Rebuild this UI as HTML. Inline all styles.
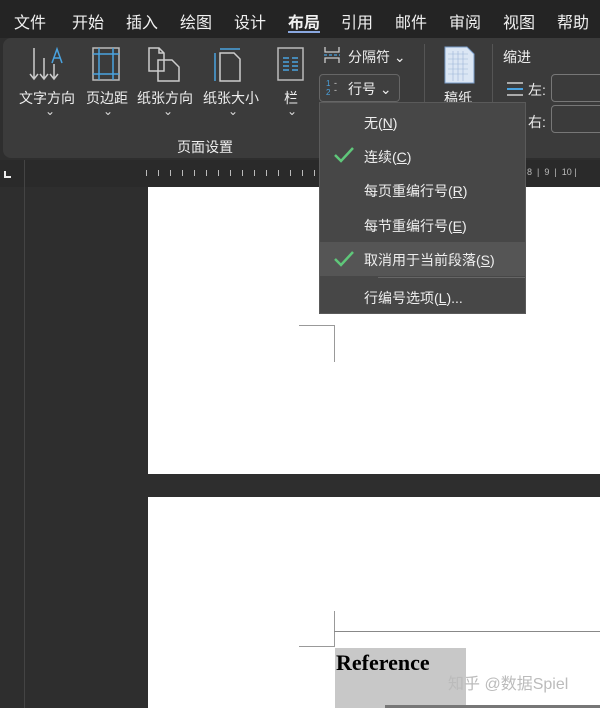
<!DOCTYPE html>
<html><head><meta charset="utf-8"><style>
*{margin:0;padding:0;box-sizing:border-box}
body{width:600px;height:708px;overflow:hidden;background:#2e2e2e;font-family:"Liberation Sans","Noto Sans CJK SC",sans-serif;color:#fff;position:relative}
.a{position:absolute}
.tab{position:absolute;top:9px;font-size:16px;color:#f0f0f0}
.lbl{position:absolute;font-size:14px;color:#eee;white-space:nowrap}
.chev{position:absolute;font-size:12px;color:#ddd}
.mi{position:absolute;left:364px;font-size:14px;color:#eee}
.chk{position:absolute;left:333px;top:0}
</style></head><body>
<div class="a" style="left:0;top:0;width:600px;height:38px;background:#242424"></div>
<div class="tab" style="left:14px">文件</div>
<div class="tab" style="left:72px">开始</div>
<div class="tab" style="left:126px">插入</div>
<div class="tab" style="left:180px">绘图</div>
<div class="tab" style="left:234px">设计</div>
<div class="tab" style="left:288px;font-weight:bold">布局</div>
<div class="a" style="left:288px;top:31px;width:32px;height:2px;background:#8aa8e0"></div>
<div class="tab" style="left:341px">引用</div>
<div class="tab" style="left:395px">邮件</div>
<div class="tab" style="left:449px">审阅</div>
<div class="tab" style="left:503px">视图</div>
<div class="tab" style="left:557px">帮助</div>
<div class="a" style="left:3px;top:38px;width:610px;height:120px;background:#3b3b3b;border-radius:8px"></div>
<svg class="a" style="left:28px;top:46px" width="40" height="38" fill="none" stroke="#ccc" stroke-width="1.5"><path d="M6 2v30M2 28l4 5 4-5M16 12v20M12 28l4 5 4-5M26 18v14M22 28l4 5 4-5"/><path d="M24 17l5-14 5 14M26 12h6" stroke="#4aa3e0"/></svg>
<svg class="a" style="left:92px;top:47px" width="30" height="36" fill="none"><rect x="1" y="1" width="26" height="32" stroke="#bbb" stroke-width="1.5"/><path d="M7 1v32M21 1v32M1 7h26M1 27h26" stroke="#4aa3e0" stroke-width="1.5"/></svg>
<svg class="a" style="left:148px;top:47px" width="36" height="36" fill="none" stroke="#ccc" stroke-width="1.5"><path d="M1 1h10l5 5v18H1zM11 1v5h5M10 13h14l7 7v14H10z"/></svg>
<svg class="a" style="left:212px;top:47px" width="32" height="36" fill="none" stroke-width="1.5"><path d="M8 6h14l6 6v22H8z" stroke="#ccc"/><path d="M3 6v28M8 2h20" stroke="#4aa3e0"/></svg>
<svg class="a" style="left:277px;top:47px" width="28" height="36" fill="none"><rect x="1" y="1" width="25" height="32" stroke="#bbb" stroke-width="1.5"/><path d="M6 11h6M15 11h6M6 15h6M15 15h6M6 19h6M15 19h6M6 23h6M15 23h6" stroke="#4aa3e0" stroke-width="1.5"/></svg>
<div class="lbl" style="left:19px;top:88px">文字方向</div>
<div class="lbl" style="left:86px;top:88px">页边距</div>
<div class="lbl" style="left:137px;top:88px">纸张方向</div>
<div class="lbl" style="left:203px;top:88px">纸张大小</div>
<div class="lbl" style="left:284px;top:88px">栏</div>
<div class="chev" style="left:45px;top:104px">⌄</div>
<div class="chev" style="left:103px;top:104px">⌄</div>
<div class="chev" style="left:163px;top:104px">⌄</div>
<div class="chev" style="left:228px;top:104px">⌄</div>
<div class="chev" style="left:287px;top:104px">⌄</div>
<div class="lbl" style="left:177px;top:137px">页面设置</div>
<svg class="a" style="left:323px;top:46px" width="18" height="18" fill="none" stroke="#ccc" stroke-width="1.3"><path d="M2 1v5h14V1M2 17v-5h14v5"/><path d="M1 9h16" stroke="#4aa3e0" stroke-dasharray="3 2"/></svg>
<div class="lbl" style="left:348px;top:47px">分隔符 ⌄</div>
<div class="a" style="left:319px;top:74px;width:81px;height:28px;border:1px solid #666;border-radius:4px;background:#3f3f3f"></div>
<div class="a" style="left:326px;top:79px;font-size:8px;line-height:9px;color:#4aa3e0">1<br>2</div>
<div class="a" style="left:334px;top:80px;font-size:9px;line-height:7px;color:#ccc">-<br>-</div>
<div class="lbl" style="left:348px;top:79px">行号 ⌄</div>
<div class="a" style="left:424px;top:44px;width:1px;height:58px;background:#555"></div>
<div class="a" style="left:492px;top:44px;width:1px;height:58px;background:#555"></div>
<svg class="a" style="left:444px;top:46px" width="32" height="38"><path d="M1 1h22l7 7v29H1z" fill="#dbe6f4" stroke="#7a9cc8"/><path d="M4 8h20M4 13h20M4 18h20M4 23h20M4 28h20M9 5v30M14 5v30M19 5v30" stroke="#9bb3d6" stroke-width=".6"/></svg>
<div class="lbl" style="left:444px;top:88px">稿纸</div>
<div class="lbl" style="left:503px;top:47px">缩进</div>
<div class="a" style="left:507px;top:82px;width:16px;height:2px;background:#aaa"></div>
<div class="a" style="left:507px;top:88px;width:16px;height:2px;background:#4aa3e0"></div>
<div class="a" style="left:507px;top:94px;width:16px;height:2px;background:#aaa"></div>
<div class="lbl" style="left:528px;top:80px">左:</div>
<div class="lbl" style="left:528px;top:112px">右:</div>
<div class="a" style="left:551px;top:74px;width:60px;height:28px;border:1px solid #777;border-radius:4px"></div>
<div class="a" style="left:551px;top:105px;width:60px;height:28px;border:1px solid #777;border-radius:4px"></div>
<div class="a" style="left:0;top:160px;width:600px;height:27px;background:#2a2a2a"></div>
<div class="a" style="left:24px;top:160px;width:1px;height:548px;background:#444"></div>
<div class="a" style="left:4px;top:171px;width:7px;height:7px;border-left:2px solid #eee;border-bottom:2px solid #eee"></div>
<div class="a" style="left:146px;top:170px;width:174px;height:6px;background:repeating-linear-gradient(90deg,#bbb 0 1px,transparent 1px 12px)"></div>
<div class="a" style="left:527px;top:167px;font-size:9px;color:#bbb">8 &nbsp;|&nbsp; 9 &nbsp;|&nbsp; 10 |</div>
<div class="a" style="left:148px;top:187px;width:452px;height:287px;background:#fff"></div>
<div class="a" style="left:148px;top:497px;width:452px;height:211px;background:#fff"></div>
<div class="a" style="left:299px;top:325px;width:36px;height:1px;background:#999"></div>
<div class="a" style="left:334px;top:325px;width:1px;height:37px;background:#999"></div>
<div class="a" style="left:334px;top:611px;width:1px;height:35px;background:#999"></div>
<div class="a" style="left:299px;top:646px;width:36px;height:1px;background:#999"></div>
<div class="a" style="left:334px;top:631px;width:266px;height:1px;background:#888"></div>
<div class="a" style="left:335px;top:648px;width:131px;height:60px;background:#c8c8c8"></div>
<div class="a" style="left:336px;top:650px;font-family:'Liberation Serif',serif;font-weight:bold;font-size:22px;color:#000">Reference</div>
<div class="a" style="left:385px;top:705px;width:215px;height:3px;background:#777"></div>
<div class="a" style="left:448px;top:670px;font-size:16px;color:#bbb">知乎 @数据Spiel</div>
<div class="a" style="left:319px;top:102px;width:207px;height:212px;background:#474747;border:1px solid #5a5a5a"></div>
<div class="a" style="left:320px;top:242px;width:205px;height:34px;background:#555"></div>
<div class="a" style="left:378px;top:277px;width:147px;height:1px;background:#666"></div>
<div class="mi" style="top:113px">无(<u>N</u>)</div>
<svg class="a" style="left:334px;top:147px" width="20" height="16" fill="none" stroke="#5fc77a" stroke-width="2.5"><path d="M1 8l6 6L19 1"/></svg>
<div class="mi" style="top:147px">连续(<u>C</u>)</div>
<div class="mi" style="top:181px">每页重编行号(<u>R</u>)</div>
<div class="mi" style="top:216px">每节重编行号(<u>E</u>)</div>
<svg class="a" style="left:334px;top:251px" width="20" height="16" fill="none" stroke="#5fc77a" stroke-width="2.5"><path d="M1 8l6 6L19 1"/></svg>
<div class="mi" style="top:250px">取消用于当前段落(<u>S</u>)</div>
<div class="mi" style="top:288px">行编号选项(<u>L</u>)...</div>
</body></html>
